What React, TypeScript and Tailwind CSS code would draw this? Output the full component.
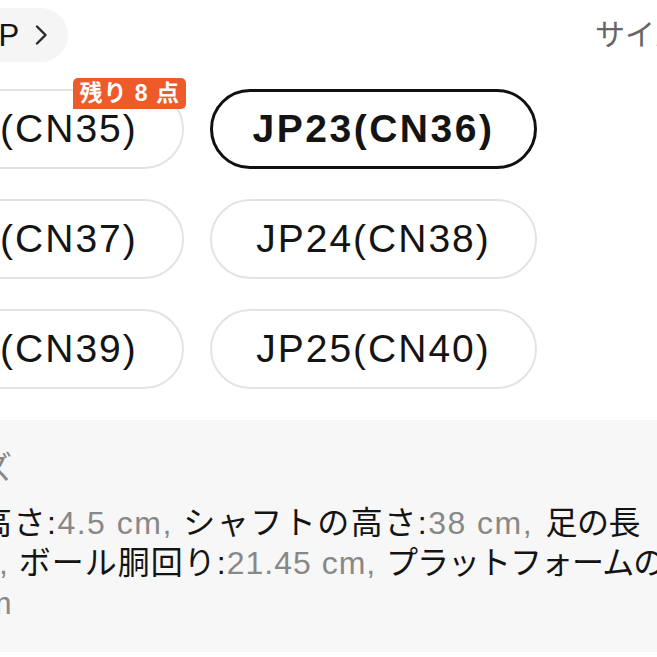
import React from 'react'

type Size = {
  label: string
  selected?: boolean
  badge?: string
}

const sizes: Size[] = [
  { label: 'JP22(CN35)', badge: '残り 8 点' },
  { label: 'JP23(CN36)', selected: true },
  { label: 'JP23(CN37)' },
  { label: 'JP24(CN38)' },
  { label: 'JP24(CN39)' },
  { label: 'JP25(CN40)' },
]

export default function App() {
  return (
    <div className="w-[657px] h-[657px] overflow-hidden bg-white text-[#141414] font-['Liberation_Sans','Noto_Sans_CJK_JP',sans-serif]">
      {/* top bar */}
      <div className="flex items-center pt-[8px]">
        <div className="-ml-[37px] flex items-center h-[54px] pl-[20px] pr-[21px] rounded-full bg-[#f5f5f5] shrink-0">
          <span className="text-[31px] leading-none">JP</span>
          <svg className="ml-[16px]" width="12" height="20" viewBox="0 0 12 20" fill="none">
            <polyline points="2,1.5 10.5,10 2,18.5" stroke="#2a2a2a" strokeWidth="2.4" strokeLinecap="round" strokeLinejoin="round" />
          </svg>
        </div>
        <span className="ml-auto -mr-[57px] shrink-0 whitespace-nowrap text-[30px] leading-none text-[#666]">サイズ表</span>
      </div>

      {/* size grid */}
      <div className="-ml-[143px] mt-[27px] grid grid-cols-[327px_327px] gap-x-[26px] gap-y-[30px]">
        {sizes.map(s => (
          <div
            key={s.label}
            className={`relative h-[80px] rounded-full flex items-center justify-center whitespace-nowrap text-[39px] ${
              s.selected ? 'border-[3px] border-[#111] font-bold tracking-[2.5px]' : 'border-2 border-[#e3e3e3] tracking-[2px]'
            }`}
          >
            {s.label}
            {s.badge && (
              <span className="absolute -top-[13px] -right-[4px] h-[31px] px-[6px] flex items-center rounded-[5px] rounded-bl-none bg-[#ef5a2b] text-white text-[23px] font-bold tracking-[1px] leading-none">
                {s.badge}
              </span>
            )}
          </div>
        ))}
      </div>

      {/* size details */}
      <div className="mt-[31px] h-[232px] bg-[#f7f7f7] pt-[28px] text-[32px] leading-[40px] overflow-hidden">
        <div className="-ml-[86px] text-[#888] whitespace-nowrap tracking-[1.5px] mb-[15px]">サイズ</div>
        <div className="-ml-[20px] whitespace-nowrap tracking-[1.5px]">
          <span>高さ:</span>
          <span className="text-[#888]">4.5 cm, </span>
          <span>シャフトの高さ:</span>
          <span className="text-[#888]">38 cm, </span>
          <span className="ml-[2px] tracking-[-0.5px]">足の長</span>
        </div>
        <div className="-ml-[1px] whitespace-nowrap tracking-[1px]">
          <span className="text-[#888]">, </span>
          <span>ボール胴回り:</span>
          <span className="text-[#888]">21.45 cm, </span>
          <span className="tracking-[-1px]">プラットフォームの</span>
        </div>
        <div className="-ml-[15px] text-[#888] whitespace-nowrap">m</div>
      </div>
    </div>
  )
}
